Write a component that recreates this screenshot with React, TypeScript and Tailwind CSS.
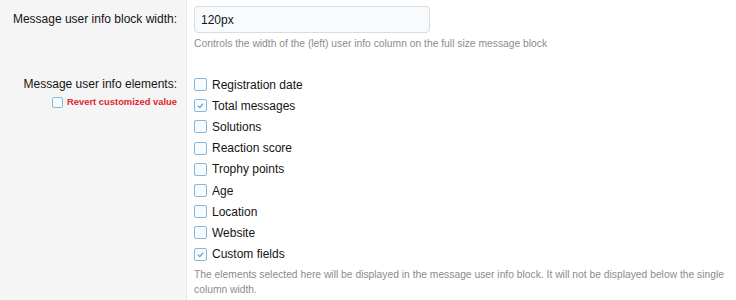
import React from "react";

function Box({ checked, small }: { checked?: boolean; small?: boolean }) {
  const s = small ? "w-[11px] h-[11px]" : "w-[13px] h-[13px]";
  return (
    <span
      className={`${s} shrink-0 inline-flex items-center justify-center border border-[#84b8de] rounded-[2px] bg-[#f8fbfe]`}
    >
      {checked && (
        <svg width="9" height="9" viewBox="0 0 10 10">
          <path d="M2 5.2 L4.2 7.3 L8 2.8" fill="none" stroke="#5f9fd0" strokeWidth="1.3" />
        </svg>
      )}
    </span>
  );
}

const items: [string, boolean][] = [
  ["Registration date", false],
  ["Total messages", true],
  ["Solutions", false],
  ["Reaction score", false],
  ["Trophy points", false],
  ["Age", false],
  ["Location", false],
  ["Website", false],
  ["Custom fields", true],
];

export default function App() {
  return (
    <div
      className="w-[736px] h-[300px] overflow-hidden bg-white text-[#141414]"
      style={{ fontFamily: '"Liberation Sans", Arial, sans-serif' }}
    >
      <div className="flex h-full">
        <div className="w-[187px] shrink-0 bg-[#f5f5f5] border-r border-[#e7e7e7] flex flex-col items-end pr-[9px]">
          <div className="h-[38px] flex items-center text-[12px] whitespace-nowrap">Message user info block width:</div>
          <div className="mt-[36px] text-[12px] leading-[20px] text-right whitespace-nowrap">Message user info elements:</div>
          <div className="flex items-center gap-[4px] mt-[1px]">
            <Box small />
            <span className="text-[9.4px] font-bold text-[#e2242f] whitespace-nowrap">Revert customized value</span>
          </div>
        </div>
        <div className="flex-1 pl-[7px]">
          <div className="pt-[6px]">
            <div className="w-[236px] h-[27px] border border-[#dcdcdc] rounded-[4px] bg-[#f8fbfd] flex items-center pl-[6px] text-[12px]">
              120px
            </div>
            <div className="mt-[4px] text-[10.3px] text-[#8c8c8c] leading-[14px]">
              Controls the width of the (left) user info column on the full size message block
            </div>
          </div>
          <div className="mt-[23px] flex flex-col">
            {items.map(([label, c]) => (
              <div key={label} className="h-[21.2px] flex items-center gap-[5px] text-[12px]">
                <Box checked={c} />
                <span>{label}</span>
              </div>
            ))}
          </div>
          <div className="mt-[2px] text-[10.3px] text-[#8c8c8c] leading-[15px] w-[535px]">
            The elements selected here will be displayed in the message user info block. It will not be displayed below the single column width.
          </div>
        </div>
      </div>
    </div>
  );
}
